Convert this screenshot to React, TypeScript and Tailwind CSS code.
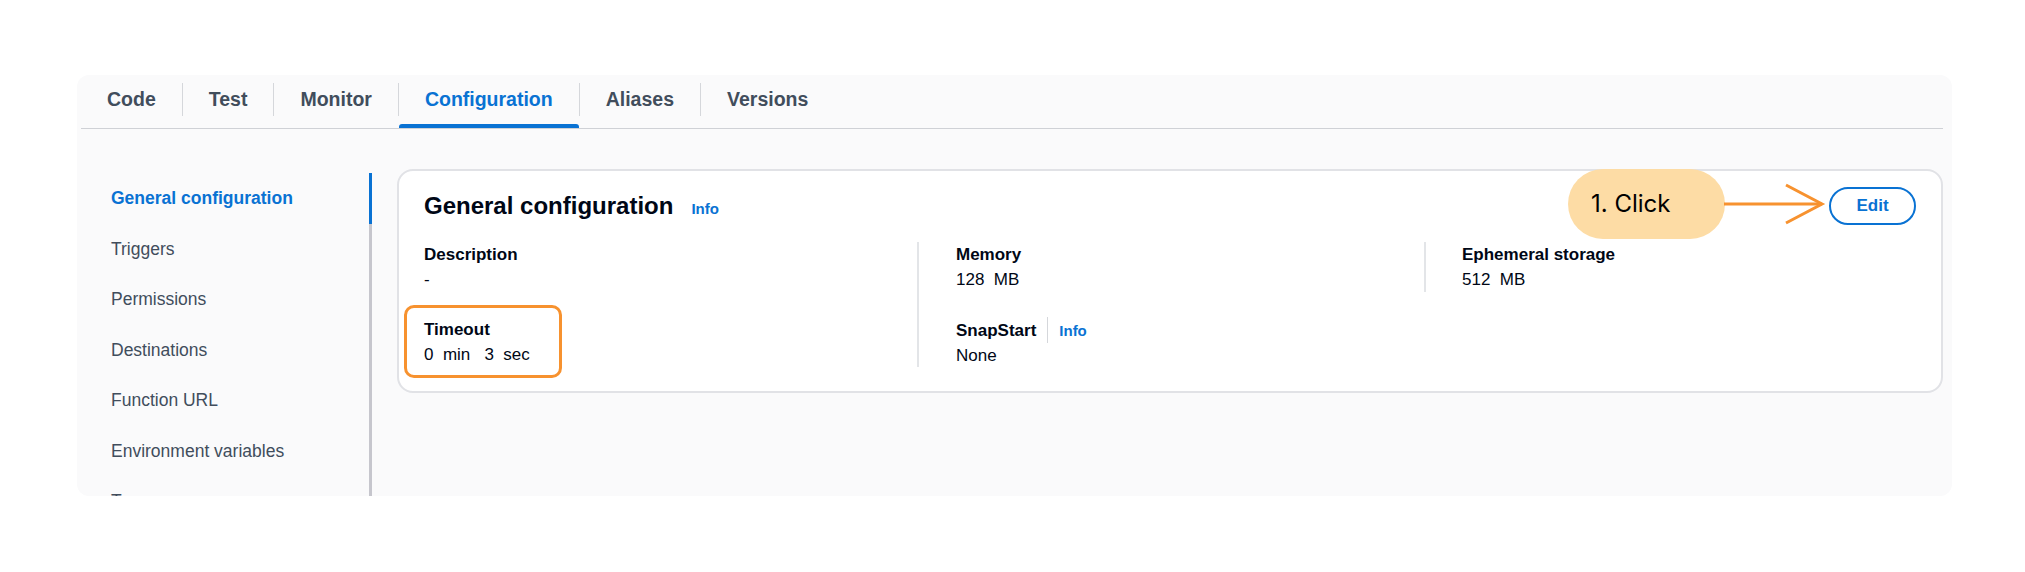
import React from "react";

const tabs = ["Code", "Test", "Monitor", "Configuration", "Aliases", "Versions"];
const navItems = [
  "General configuration",
  "Triggers",
  "Permissions",
  "Destinations",
  "Function URL",
  "Environment variables",
  "Tags",
];

function KeyValue({
  label,
  value,
  info,
}: {
  label: string;
  value: string;
  info?: boolean;
}) {
  return (
    <div className="h-[50px] leading-[25px] text-[17px] text-[#000716]">
      <div className="flex items-center">
        <span className="font-bold">{label}</span>
        {info && (
          <>
            <span className="ml-[11px] h-[26px] w-px bg-[#d5d7db]" />
            <span className="ml-[11px] text-[15px] font-bold text-[#0972d3]">Info</span>
          </>
        )}
      </div>
      <div className="whitespace-pre">{value}</div>
    </div>
  );
}

export default function App() {
  const active = "Configuration";

  return (
    <div
      className="min-h-[572px] bg-white pl-[77px] pt-[75px]"
      style={{ fontFamily: '"Liberation Sans", Arial, sans-serif' }}
    >
      <div className="flex h-[421px] w-[1875px] flex-col overflow-hidden rounded-[12px] bg-[#fafafb]">
        {/* Tabs */}
        <div className="ml-[4px] mr-[9px] flex h-[54px] shrink-0 items-start border-b border-[#cfd1d6]">
          {tabs.map((tab, i) => (
            <React.Fragment key={tab}>
              {i > 0 && <span className="mt-[8px] h-[33px] w-px bg-[#d5d7db]" />}
              <div
                className={`relative flex h-[53px] items-center px-[26px] pb-[3px] text-[19.5px] font-bold ${
                  tab === active ? "text-[#0972d3]" : "text-[#414d5c]"
                }`}
              >
                {tab}
                {tab === active && (
                  <span className="absolute bottom-0 left-0 right-0 h-[4px] rounded-t-[3px] bg-[#0972d3]" />
                )}
              </div>
            </React.Fragment>
          ))}
        </div>

        {/* Body */}
        <div className="flex min-h-0 flex-1 pr-[9px] pt-[40px]">
          {/* Side navigation */}
          <div className="mt-[4px] w-[295px] shrink-0 pl-[34px]">
            {navItems.map((item) => (
              <div
                key={item}
                className={`flex h-[50.5px] items-center border-r-[3px] text-[17.5px] ${
                  item === navItems[0]
                    ? "border-[#0972d3] font-bold text-[#0972d3]"
                    : "border-[#c6c6cd] text-[#414d5c]"
                }`}
              >
                {item}
              </div>
            ))}
          </div>

          {/* Card */}
          <div className="ml-[25px] flex-1 self-start">
            <div className="relative rounded-[16px] border-2 border-[#e1e2e6] bg-white px-[25px] pb-[24px] pt-[16px]">
              <div className="flex h-[38px] items-center justify-between">
                <div className="flex items-baseline">
                  <h2 className="text-[24px] font-bold text-[#000716]">General configuration</h2>
                  <span className="ml-[18px] text-[15px] font-bold text-[#0972d3]">Info</span>
                </div>
                <button className="h-[38px] w-[87px] rounded-full border-2 border-[#0972d3] text-[17px] font-bold text-[#0972d3]">
                  Edit
                </button>
              </div>

              <div className="mt-[17px] flex">
                <div className="w-[493px] shrink-0">
                  <KeyValue label="Description" value="-" />
                  <div className="relative mt-[25px]">
                    <span className="absolute -left-[20px] -top-[12px] h-[73px] w-[158px] rounded-[10px] border-[3px] border-[#f7922f]" />
                    <KeyValue label="Timeout" value={"0  min   3  sec"} />
                  </div>
                </div>
                <div className="w-[507px] shrink-0 border-l-2 border-[#e3e5e8] pl-[37px]">
                  <KeyValue label="Memory" value={"128  MB"} />
                  <div className="mt-[25px]">
                    <KeyValue label="SnapStart" value="None" info />
                  </div>
                </div>
                <div className="flex-1 self-start border-l-2 border-[#e3e5e8] pl-[36px]">
                  <KeyValue label="Ephemeral storage" value={"512  MB"} />
                </div>
              </div>

              {/* Annotation: callout + arrow */}
              <div
                className="absolute -top-[2px] right-[216px] flex h-[70px] w-[157px] items-center rounded-full bg-[#fddca5] pl-[23px] text-[24px] text-black"
                style={{ fontFamily: "Inter, sans-serif" }}
              >
                1. Click
              </div>
              <svg
                className="absolute right-[115px] top-[12px]"
                width="102"
                height="44"
                viewBox="0 0 102 44"
                fill="none"
                stroke="#f7922f"
                strokeWidth="3"
              >
                <line x1="0" y1="21" x2="98" y2="21" />
                <polyline points="62,2 98,21 62,40" />
              </svg>
            </div>
          </div>
        </div>
      </div>
    </div>
  );
}
